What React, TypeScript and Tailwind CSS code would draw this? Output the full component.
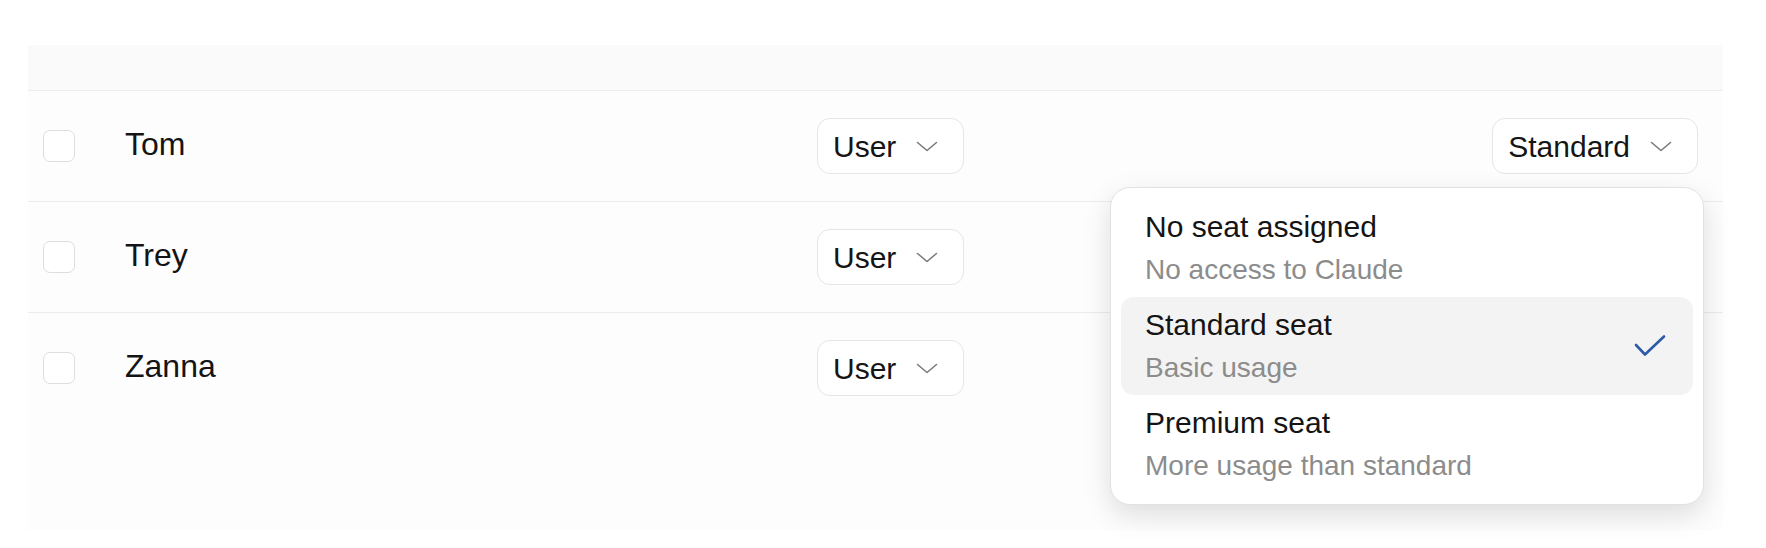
type Member = { name: string; role: string; seat: string };

const members: Member[] = [
  { name: "Tom", role: "User", seat: "Standard" },
  { name: "Trey", role: "User", seat: "Standard" },
  { name: "Zanna", role: "User", seat: "Standard" },
];

const seatOptions = [
  { label: "No seat assigned", hint: "No access to Claude" },
  { label: "Standard seat", hint: "Basic usage" },
  { label: "Premium seat", hint: "More usage than standard" },
];

const Chevron = () => (
  <svg width="22" height="11" viewBox="0 0 22 11" fill="none" className="shrink-0">
    <path d="M1.5 1.5 L11 9.5 L20.5 1.5" stroke="#7a7a7a" strokeWidth="1.6" strokeLinecap="round" strokeLinejoin="round" />
  </svg>
);

const SelectButton = ({ value }: { value: string }) => (
  <button className="flex h-[56px] items-center gap-[20px] rounded-[13px] border border-[#e6e6e6] bg-white pl-[15px] pr-[25px] text-[30px] text-[#151515]">
    <span>{value}</span>
    <Chevron />
  </button>
);

const Row = ({ member }: { member: Member }) => (
  <div className="flex h-[111px] items-center border-t border-[#ececec] pr-[25px]">
    <div className="ml-[15px] h-[32px] w-[32px] shrink-0 rounded-[7px] border-[1.5px] border-[#dedede] bg-white" />
    <div className="ml-[50px] w-[692px] shrink-0 pb-[4px] text-[32px] text-[#141414]">{member.name}</div>
    <SelectButton value={member.role} />
    <div className="flex-1" />
    <SelectButton value={member.seat} />
  </div>
);

const SeatMenu = ({ selected }: { selected: number }) => (
  <div className="absolute left-[1082px] top-[142px] w-[594px] rounded-[20px] border border-[#e2e2e2] bg-white px-[10px] py-[11px] shadow-[0_10px_28px_rgba(0,0,0,0.13)]">
    {seatOptions.map((opt, i) => (
      <div
        key={opt.label}
        className={`flex h-[98px] items-center justify-between rounded-[13px] pl-[24px] pr-[27px] ${
          i === selected ? "bg-[#f3f3f3]" : ""
        }`}
      >
        <div className="flex flex-col gap-[8px]">
          <span className="text-[30px] leading-[36px] text-[#141414]">{opt.label}</span>
          <span className="text-[28px] leading-[34px] text-[#8c8c8c]">{opt.hint}</span>
        </div>
        {i === selected && (
          <svg width="32" height="24" viewBox="0 0 32 24" fill="none">
            <path d="M2 11 L11 20.5 L30 2.5" stroke="#2d5aa6" strokeWidth="2.6" strokeLinecap="round" strokeLinejoin="round" />
          </svg>
        )}
      </div>
    ))}
  </div>
);

export default function App() {
  return (
    <div className="h-[548px] w-full bg-white pt-[45px] font-['Liberation_Sans',Arial,sans-serif]">
      <div className="relative ml-[28px] h-[485px] w-[1695px] bg-[#fdfdfd]">
        <div className="h-[45px] bg-[#fafafa]" />
        {members.map((m) => (
          <Row key={m.name} member={m} />
        ))}
        <SeatMenu selected={1} />
      </div>
    </div>
  );
}
